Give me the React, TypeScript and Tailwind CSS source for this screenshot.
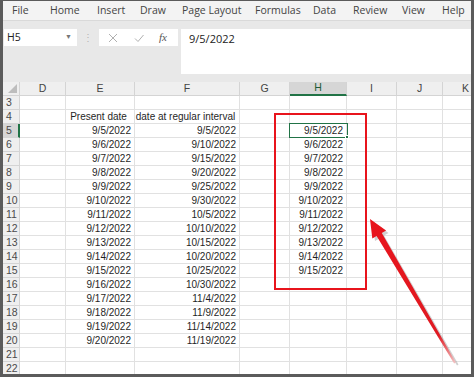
import React from "react";

const cellFont = { fontFamily: '"Liberation Sans", Arial, sans-serif' };
const uiFont = { fontFamily: '"Open Sans", "Noto Sans", sans-serif' };

type Col = { k: string; w: string };
const cols: Col[] = [
  { k: "D", w: "w-[46px]" },
  { k: "E", w: "w-[69px]" },
  { k: "F", w: "w-[105px]" },
  { k: "G", w: "w-[50px]" },
  { k: "H", w: "w-[57px]" },
  { k: "I", w: "w-[50px]" },
  { k: "J", w: "w-[46px]" },
  { k: "K", w: "w-[46px]" },
];

const eDates: string[] = [];
for (let d = 5; d <= 20; d++) eDates.push(`9/${d}/2022`);
const fDates = [
  "9/5/2022", "9/10/2022", "9/15/2022", "9/20/2022", "9/25/2022", "9/30/2022",
  "10/5/2022", "10/10/2022", "10/15/2022", "10/20/2022", "10/25/2022", "10/30/2022",
  "11/4/2022", "11/9/2022", "11/14/2022", "11/19/2022",
];
const hDates: string[] = [];
for (let d = 5; d <= 15; d++) hDates.push(`9/${d}/2022`);

function cellValue(row: number, col: string): { text: string; align: string } | null {
  if (row === 4 && col === "E") return { text: "Present date", align: "justify-center" };
  if (row === 4 && col === "F") return { text: "date at regular interval", align: "justify-center" };
  if (row >= 5 && row <= 20 && col === "E") return { text: eDates[row - 5], align: "justify-end" };
  if (row >= 5 && row <= 20 && col === "F") return { text: fDates[row - 5], align: "justify-end" };
  if (row >= 5 && row <= 15 && col === "H") return { text: hDates[row - 5], align: "justify-end" };
  return null;
}

const menu: { t: string; w: string }[] = [
  { t: "File", w: "w-[38px]" },
  { t: "Home", w: "w-[47px]" },
  { t: "Insert", w: "w-[43px]" },
  { t: "Draw", w: "w-[42px]" },
  { t: "Page Layout", w: "w-[73px]" },
  { t: "Formulas", w: "w-[58px]" },
  { t: "Data", w: "w-[40px]" },
  { t: "Review", w: "w-[49px]" },
  { t: "View", w: "w-[40px]" },
  { t: "Help", w: "w-[30px]" },
];

const rows: number[] = [];
for (let r = 3; r <= 22; r++) rows.push(r);

export default function App() {
  return (
    <div className="relative w-[474px] h-[377px] overflow-hidden bg-[#5b5b5b]">
      <div className="absolute left-[3px] top-[1px] w-[468px] h-[373px] bg-white overflow-hidden flex flex-col">
        {/* Menu bar */}
        <div
          className="h-[20px] shrink-0 flex items-center bg-[#f3f3f3] pl-[9px] text-[10.5px] text-[#444] border-b border-[#d9d9d9]"
          style={uiFont}
        >
          {menu.map((m) => (
            <div key={m.t} className={`${m.w} shrink-0 whitespace-nowrap`}>
              {m.t}
            </div>
          ))}
        </div>
        {/* Formula bar */}
        <div className="h-[61px] shrink-0 bg-[#e8e8e8] flex items-start pt-[8px] pl-[1px]">
          <div
            className="w-[73px] h-[17px] bg-white flex items-center justify-between pl-[3px] pr-[5px] text-[10.5px] text-[#222]"
            style={uiFont}
          >
            <span>H5</span>
            <span className="text-[7px] text-[#777]">▼</span>
          </div>
          <div className="w-[22px] h-[17px] flex items-center justify-center text-[#b5b5b5] text-[10px]">⋮</div>
          <div className="w-[79px] h-[17px] bg-white flex items-center text-[#b3b3b3]">
            <svg width="10" height="10" viewBox="0 0 10 10" className="ml-[9px]">
              <path d="M1 1 L9 9 M9 1 L1 9" stroke="#b0b0b0" strokeWidth="1" fill="none" />
            </svg>
            <svg width="10" height="10" viewBox="0 0 10 10" className="ml-[16px]">
              <path d="M1 5.5 L4 8.5 L9.5 2" stroke="#b0b0b0" strokeWidth="1" fill="none" />
            </svg>
            <span
              className="ml-[15px] italic text-[11px] text-[#555]"
              style={{ fontFamily: '"Liberation Serif", "Times New Roman", serif' }}
            >
              fx
            </span>
          </div>
          <div className="ml-[3px] flex-1 h-[45px] bg-white pl-[8px] pt-[2px] text-[11px] text-[#222]" style={uiFont}>
            9/5/2022
          </div>
        </div>
        {/* Column headers */}
        <div className="h-[14px] shrink-0 flex text-[10.5px] text-[#444] bg-[#efefef]" style={cellFont}>
          <div className="w-[17px] shrink-0 h-[14px] border-r border-b border-[#d4d4d4] flex items-end justify-end pr-[2px] pb-[2px]">
            <svg width="9" height="9" viewBox="0 0 9 9">
              <path d="M9 0 L9 9 L0 9 Z" fill="#bdbdbd" />
            </svg>
          </div>
          {cols.map((c) => (
            <div
              key={c.k}
              className={`${c.w} shrink-0 h-[14px] flex items-center justify-center border-r border-[#d4d4d4] ${
                c.k === "H" ? "bg-[#d6d6d6] border-b-2 border-b-[#217346] text-[#1e5a36]" : "border-b"
              }`}
            >
              {c.k}
            </div>
          ))}
        </div>
        {/* Rows */}
        {rows.map((r) => (
          <div key={r} className="h-[14px] shrink-0 flex text-[10px] text-[#1f1f1f]" style={cellFont}>
            <div
              className={`w-[17px] shrink-0 h-[14px] flex items-center pl-[3px] text-[10.5px] text-[#4a4a4a] border-b border-[#d4d4d4] ${
                r === 5 ? "bg-[#d6d6d6] border-r-2 border-r-[#217346] text-[#1e5a36]" : "bg-[#efefef] border-r"
              }`}
            >
              {r}
            </div>
            {cols.map((c) => {
              const v = cellValue(r, c.k);
              return (
                <div
                  key={c.k}
                  className={`${c.w} shrink-0 h-[14px] flex items-center border-r border-b border-[#e1e1e1] pr-[3px] whitespace-nowrap ${
                    v ? v.align : ""
                  }`}
                >
                  {v ? v.text : ""}
                </div>
              );
            })}
          </div>
        ))}
      </div>

      {/* Selected cell H5 */}
      <div className="absolute left-[289px] top-[123px] w-[59px] h-[15px] border-[1.5px] border-[#217346]" />
      <div className="absolute left-[345px] top-[135px] w-[4px] h-[4px] bg-[#217346] border border-white" />

      {/* Red highlight rectangle */}
      <div className="absolute left-[274px] top-[113px] w-[93px] h-[177px] border-2 border-[#e8141c]" />

      {/* Arrow */}
      <svg className="absolute left-0 top-0 pointer-events-none" width="474" height="377" viewBox="0 0 474 377">
        <defs>
          <linearGradient id="tailfade" x1="370" y1="219" x2="456" y2="364" gradientUnits="userSpaceOnUse">
            <stop offset="0" stopColor="#e8141c" />
            <stop offset="0.8" stopColor="#e01a22" />
            <stop offset="1" stopColor="#f3c9c9" />
          </linearGradient>
        </defs>
        <polygon
          points="372,221 388.5,233 384,235.5 458.5,364.5 457,365.5 379.5,238.5 375,241"
          fill="#9a9a9a"
          opacity="0.45"
        />
        <polygon
          points="370,219 386.1,230.4 381.8,233 455.9,362.5 454.1,363.5 376.6,236 372.3,238.6"
          fill="url(#tailfade)"
        />
      </svg>
    </div>
  );
}
